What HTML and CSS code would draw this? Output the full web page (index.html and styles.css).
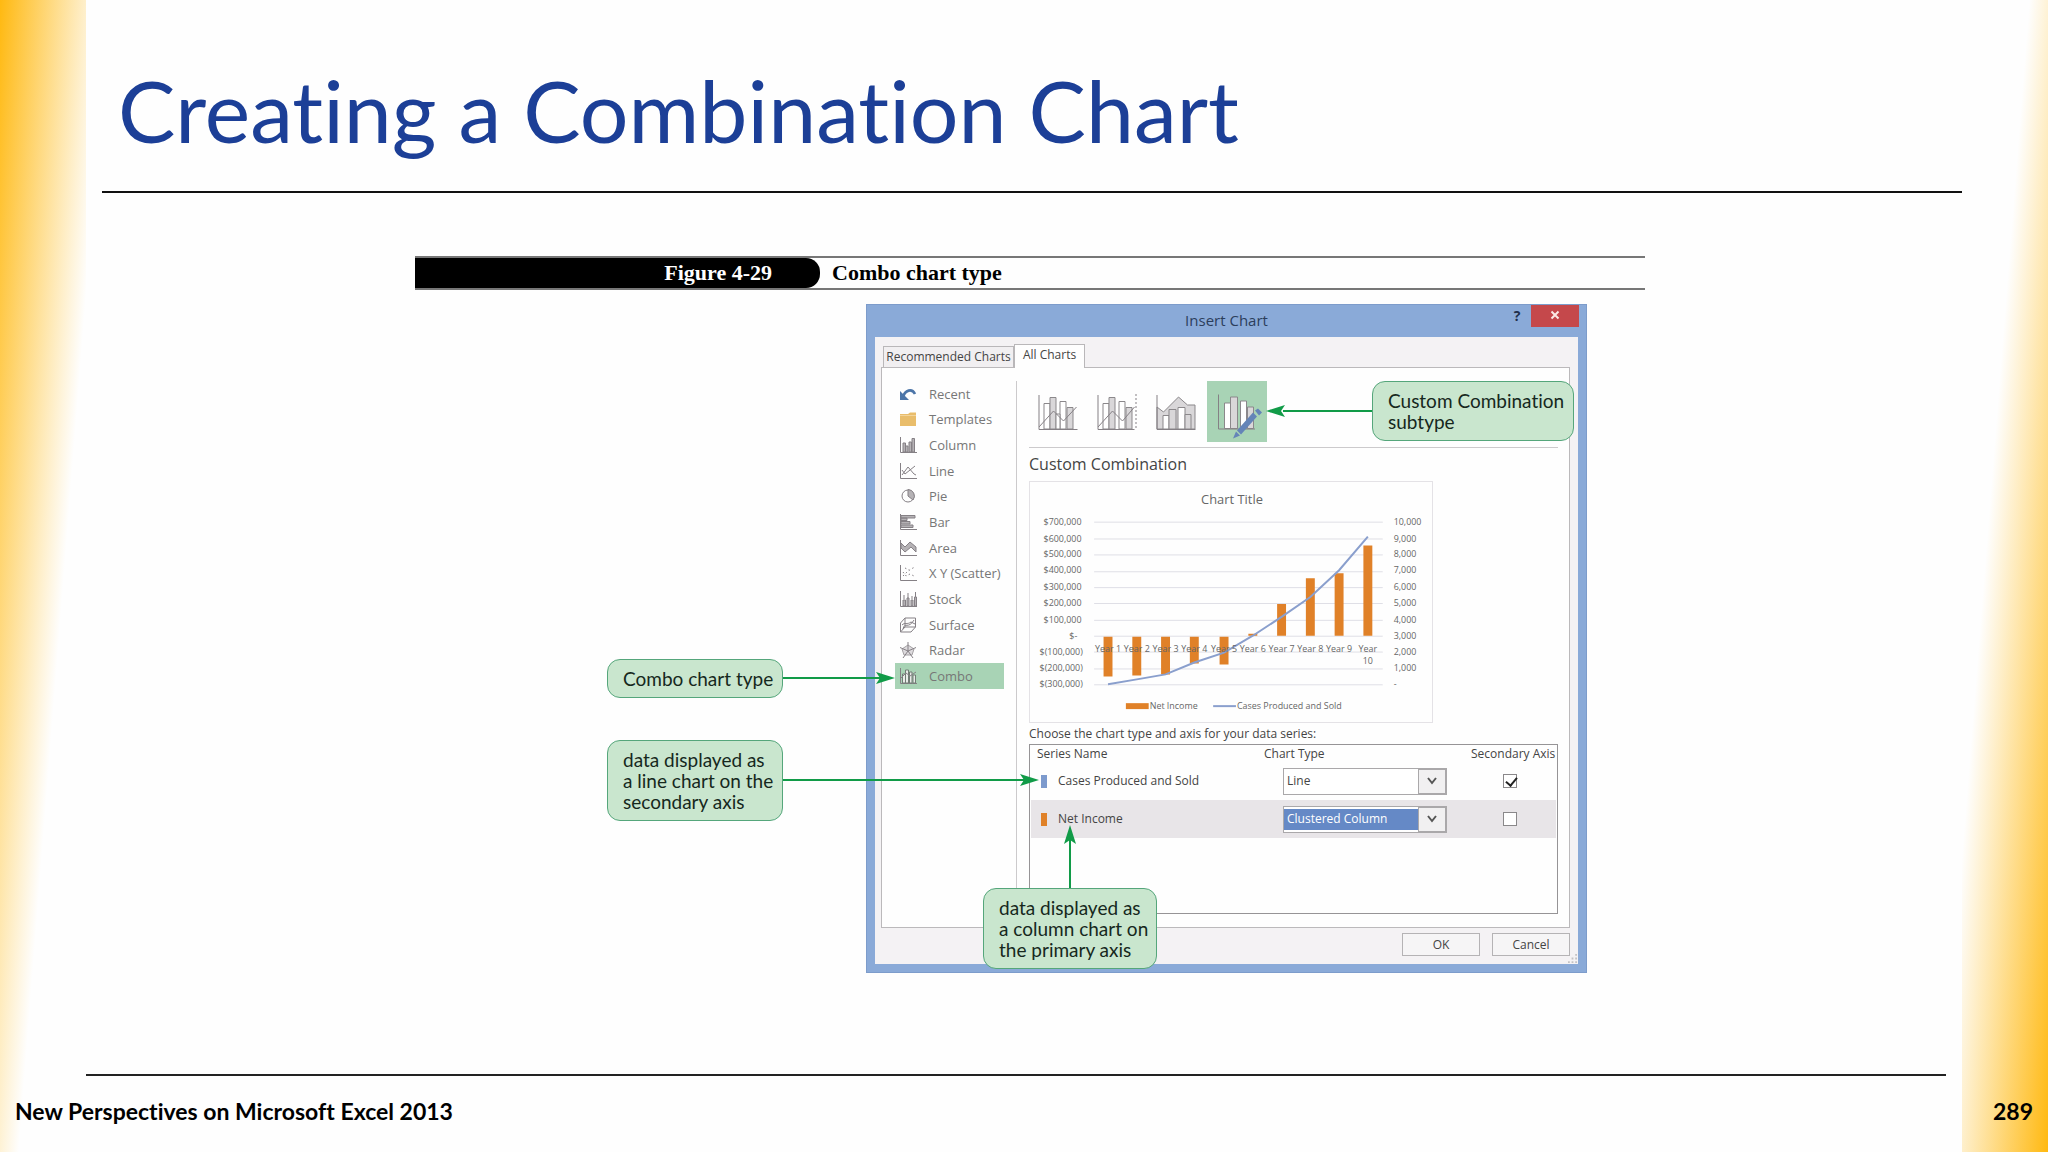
FILE: index.html
```
<!DOCTYPE html>
<html lang="en">
<head>
    <meta charset="utf-8" />
    <title>Creating a Combination Chart</title>
    <link rel="stylesheet" href="styles.css">
</head>
<body>
    <header>
        <h1>Creating a Combination Chart</h1>
    </header>

    <main>
        <figure>
            <figcaption>
                <span class="fig-number">Figure 4-29</span>
                <span class="fig-title">Combo chart type</span>
            </figcaption>

            <div class="stage">
                <section class="dialog">
                    <div class="title-bar">
                        <h2>Insert Chart</h2>
                        <button class="help">?</button>
                        <button class="close" aria-label="Close">
                            <svg width="10" height="10" viewBox="0 0 10 10"><path d="M1.5 1.5L8.5 8.5M8.5 1.5L1.5 8.5" stroke="#fbe9e4" stroke-width="2" /></svg>
                        </button>
                    </div>

                    <div class="dialog-body">
                        <nav class="tabs">
                            <button class="tab">Recommended Charts</button>
                            <button class="tab active">All Charts</button>
                        </nav>

                        <div class="panel">
                            <ul class="types">
                                <li>
                                    <svg viewBox="0 0 18 18"><path d="M4 12C6 5 13 3 16 9" fill="none" stroke="#4c75a8" stroke-width="2.6" /><path d="M1 6V15H10Z" fill="#4c75a8" /></svg>
                                    Recent
                                </li>
                                <li>
                                    <svg viewBox="0 0 18 18"><path d="M1 4H9L11 2.500H17V16H1Z" fill="#e9bd6b" /><path d="M1 5.500H17" stroke="#f3d49a" /></svg>
                                    Templates
                                </li>
                                <li>
                                    <svg viewBox="0 0 18 18"><path class="ax" d="M1.500 1V16.500H18" /><path class="gr" d="M4 7H6.500V16H4ZM6.500 10H9V16H6.500ZM10 6H12.500V16H10ZM13 2.500H15.500V16H13Z" /></svg>
                                    Column
                                </li>
                                <li>
                                    <svg viewBox="0 0 18 18"><path class="ax" d="M1.500 1V16.500H18M3 13L9 5L15 12L17 13M3 8L6 12L11 8L16 4" /></svg>
                                    Line
                                </li>
                                <li>
                                    <svg viewBox="0 0 18 18"><circle class="ax" cx="9" cy="9" r="6" /><path class="gr" d="M9 9V2.500A6.500 6.500 0 0 1 14 13Z" /></svg>
                                    Pie
                                </li>
                                <li>
                                    <svg viewBox="0 0 18 18"><path class="ax" d="M1.500 1V16.500H18" /><path class="gr" d="M2 2.500H16V5H2ZM2 5H8V7.500H2ZM2 8.500H11V11H2ZM2 12H14V14.500H2Z" /></svg>
                                    Bar
                                </li>
                                <li>
                                    <svg viewBox="0 0 18 18"><path class="ax" d="M1.500 1V16.500H18" /><path class="gr" d="M2 4L6 8L11 3L17 8V13L12 8L6 13L2 9Z" /></svg>
                                    Area
                                </li>
                                <li>
                                    <svg viewBox="0 0 18 18"><path class="ax" d="M1.500 1V16.500H18" /><path class="ax" stroke-dasharray="1.500 2.500" d="M4 12L8 8L12 5L16 3M6 4L10 6M4 8L7 12L11 10L15 12" /></svg>
                                    X Y (Scatter)
                                </li>
                                <li>
                                    <svg viewBox="0 0 18 18"><path class="ax" d="M1.500 1V16.500H18M5 5V9M9 3V8M13 6V9M16.500 2V7" /><path class="gr" d="M4 10H6.500V16H4ZM8 8H10V16H8ZM12 10H14V16H12ZM15.500 7H17.500V16H15.500Z" /></svg>
                                    Stock
                                </li>
                                <li>
                                    <svg viewBox="0 0 18 18"><path class="ax" d="M1.500 7L6 2H16.500V11L12 16H1.500ZM6 2V11L1.500 16M6 11H16.500M4 13C6 5 9 14 15 4M3 9C6 6 8 9 12 6L16 8" /></svg>
                                    Surface
                                </li>
                                <li>
                                    <svg viewBox="0 0 18 18"><path d="M9 4L15 8L13 14H5L3 8Z" fill="#dddadd" stroke="#a5a2a5" /><path class="ax" d="M9 1V10L1 6.500M9 10L17 6.500M9 10L4 17M9 10L14 17" /></svg>
                                    Radar
                                </li>
                                <li class="selected">
                                    <svg viewBox="0 0 18 18"><path class="ax" d="M1.500 1V16.500H18" /><path d="M3.500 7H6.500V16H3.500ZM6.500 3H9.500V16H6.500ZM10.500 5H13V16H10.500ZM14 8H16.500V16H14Z" fill="#e8ece8" stroke="#707c74" /><path class="ax" d="M2 11L7 6L11 9L17 5" /></svg>
                                    Combo
                                </li>
                            </ul>

                            <div class="options">
                                <div class="subtypes">
                                    <button aria-label="Clustered column - line">
                                        <svg viewBox="0 0 40 36"><path class="w" d="M6.500 9.500H12.500V35H6.500ZM22.500 7.500H28.500V35H22.500Z" /><path class="g" d="M12.500 3.500H18.500V35H12.500ZM29.500 13.500H35.500V35H29.500Z" /><path class="w" d="M18.500 20H22.500V35H18.500Z" /><path class="ax" d="M1.500 1V35.500H40M1.500 33L16 17L26 27L39 13" /></svg>
                                    </button>
                                    <button aria-label="Clustered column - line on secondary axis">
                                        <svg viewBox="0 0 40 36"><path class="w" d="M6.500 9.500H12.500V35H6.500ZM22.500 7.500H28.500V35H22.500Z" /><path class="g" d="M12.500 3.500H18.500V35H12.500ZM29.500 13.500H35.500V35H29.500Z" /><path class="ax" d="M1.500 1V35.500H38M1.500 33L16 17L26 27L38 13" /><path class="ax" stroke-dasharray="2 2" d="M39.500 0V35" /></svg>
                                    </button>
                                    <button aria-label="Stacked area - clustered column">
                                        <svg viewBox="0 0 40 36"><path class="g" d="M1.500 13L8 18L23 3L32 11H39.500V35H1.500Z" /><path class="w" d="M7.500 21.500H13.500V35H7.500ZM22.500 13.500H29.500V35H22.500Z" /><path class="g" d="M13.500 15.500H20.500V35H13.500ZM29.500 20.500H35.500V35H29.500Z" /><path class="ax" d="M1.500 1V35.500H40" /></svg>
                                    </button>
                                    <button class="selected" aria-label="Custom combination">
                                        <svg viewBox="0 0 60 60"><path class="w" d="M17.500 21.500H23.500V47H17.500ZM33.500 19.500H39.500V47H33.500Z" /><path class="g" d="M23.500 15.500H30.500V47H23.500ZM40.500 25.500H46.500V47H40.500Z" /><path class="ax" d="M11.500 13V47.500H48" /><path d="M30 49L46 31L50 35L34 53ZM48 29L51 27L55 31L52 34ZM29 50L33 54L26 57Z" fill="#6484b8" /></svg>
                                    </button>
                                </div>

                                <h3>Custom Combination</h3>

                                <svg class="chart" viewBox="0 0 404 242" role="img" aria-label="Chart preview">
                                    <text x="203" y="22" class="chart-title">Chart Title</text>
                                    <path class="grid" d="M64 40.500H355M64 57.500H355M64 73.500H355M64 90.500H355M64 106.500H355M64 122.500H355M64 139.500H355M64 155.500H355M64 171.500H355M64 188.500H355M64 204.500H355" />
                                    <path class="bars" d="M73.500 156h9v40h-9zM102.500 156h9v39h-9zM131.500 156h9v38h-9zM160.500 156h9v27h-9zM190.500 156h9v28h-9zM219.500 153h9v2h-9zM248.500 123h9v32h-9zM277.500 97h9v58h-9zM306.500 92h9v63h-9zM335.500 64h9v91h-9z" />
                                    <polyline class="series" points="78,204 107,199 136,194 165,182 195,172 224,155 253,136 282,116 311,89 340,55" />
                                    <g>
                                        <text x="13" y="43">$700,000</text>
                                        <text x="13" y="60">$600,000</text>
                                        <text x="13" y="76">$500,000</text>
                                        <text x="13" y="92">$400,000</text>
                                        <text x="13" y="109">$300,000</text>
                                        <text x="13" y="125">$200,000</text>
                                        <text x="13" y="142">$100,000</text>
                                        <text x="39" y="158">$-</text>
                                        <text x="9" y="174">$(100,000)</text>
                                        <text x="9" y="191">$(200,000)</text>
                                        <text x="9" y="207">$(300,000)</text>
                                    </g>
                                    <g>
                                        <text x="366" y="43">10,000</text>
                                        <text x="366" y="60">9,000</text>
                                        <text x="366" y="76">8,000</text>
                                        <text x="366" y="92">7,000</text>
                                        <text x="366" y="109">6,000</text>
                                        <text x="366" y="125">5,000</text>
                                        <text x="366" y="142">4,000</text>
                                        <text x="366" y="158">3,000</text>
                                        <text x="366" y="174">2,000</text>
                                        <text x="366" y="191">1,000</text>
                                        <text x="366" y="207">-</text>
                                    </g>
                                    <g class="years">
                                        <text x="78" y="171">Year 1</text>
                                        <text x="107" y="171">Year 2</text>
                                        <text x="136" y="171">Year 3</text>
                                        <text x="165" y="171">Year 4</text>
                                        <text x="195" y="171">Year 5</text>
                                        <text x="224" y="171">Year 6</text>
                                        <text x="253" y="171">Year 7</text>
                                        <text x="282" y="171">Year 8</text>
                                        <text x="311" y="171">Year 9</text>
                                        <text x="340" y="171">Year</text>
                                        <text x="340" y="184">10</text>
                                    </g>
                                    <path class="bars" d="M96 223h23v6H96z" />
                                    <text x="120" y="229">Net Income</text>
                                    <path class="series" d="M184 226H207" />
                                    <text x="208" y="229">Cases Produced and Sold</text>
                                </svg>

                                <p>Choose the chart type and axis for your data series:</p>

                                <div class="series-box">
                                    <table>
                                        <thead>
                                            <tr>
                                                <th class="name">Series Name</th>
                                                <th class="kind">Chart Type</th>
                                                <th class="axis">Secondary Axis</th>
                                            </tr>
                                        </thead>
                                        <tbody>
                                            <tr>
                                                <td class="name"><i class="swatch blue"></i><label for="kind-cases">Cases Produced and Sold</label></td>
                                                <td class="kind">
                                                    <div class="combo">
                                                        <select id="kind-cases"><option>Line</option></select>
                                                        <span><svg width="10" height="8" viewBox="0 0 10 8"><path d="M1 1L5 6L9 1" fill="none" stroke="#555" stroke-width="2" /></svg></span>
                                                    </div>
                                                </td>
                                                <td class="axis"><input type="checkbox" aria-label="Secondary axis for Cases Produced and Sold" checked /></td>
                                            </tr>
                                            <tr class="current">
                                                <td class="name"><i class="swatch orange"></i><label for="kind-income">Net Income</label></td>
                                                <td class="kind">
                                                    <div class="combo focused">
                                                        <select id="kind-income"><option>Clustered Column</option></select>
                                                        <span><svg width="10" height="8" viewBox="0 0 10 8"><path d="M1 1L5 6L9 1" fill="none" stroke="#555" stroke-width="2" /></svg></span>
                                                    </div>
                                                </td>
                                                <td class="axis"><input type="checkbox" aria-label="Secondary axis for Net Income" /></td>
                                            </tr>
                                        </tbody>
                                    </table>
                                </div>
                            </div>
                        </div>

                        <div class="actions">
                            <button>OK</button>
                            <button>Cancel</button>
                        </div>
                        <svg class="grip" viewBox="0 0 10 10"><path d="M8 0h2v2H8zM4 4h2v2H4zM8 4h2v2H8zM0 8h2v2H0zM4 8h2v2H4zM8 8h2v2H8z" fill="#c4c2c4" /></svg>
                    </div>
                </section>

                <!-- callout arrows, drawn over the dialog -->
                <svg class="arrows" width="1230" height="670" viewBox="0 0 1230 670">
                    <path d="M368 374H466M368 476H610M655 584V536M957 107H868" />
                    <g>
                        <path d="M480 374L461 368L465 374L461 380Z" />
                        <path d="M624 476L605 470L609 476L605 482Z" />
                        <path d="M655 521L649 540L655 536L661 540Z" />
                        <path d="M851 107L870 101L866 107L870 113Z" />
                    </g>
                </svg>
                <div class="callout combo-note">Combo chart type</div>
                <div class="callout line-note">data displayed as<br>a line chart on the<br>secondary axis</div>
                <div class="callout column-note">data displayed as<br>a column chart on<br>the primary axis</div>
                <div class="callout custom-note">Custom Combination<br>subtype</div>
            </div>
        </figure>
    </main>

    <footer>
        <span>New Perspectives on Microsoft Excel 2013</span>
        <span>289</span>
    </footer>
</body>
</html>
```

FILE: styles.css
```
* {
    box-sizing: border-box;
    padding: 0;
    margin: 0;
}

body {
    display: flex;
    flex-direction: column;
    min-height: 100vh;
    font-family: Lato, sans-serif;
    font-variant-ligatures: none;
    background-color: #fefefe;
    background-image:
        linear-gradient(94.5deg, #ffb911, #fefefe 109px),
        linear-gradient(274.5deg, #ffb911, #fefefe 109px);
    background-size: 86px 100%;
    background-position: left top, right top;
    background-repeat: no-repeat;
}

header {
    height: 193px;
    margin: 0 86px 0 102px;
    padding: 62px 0 0 16px;
    border-bottom: 2px solid #111;
}

h1 {
    color: #1c3f97;
    font-size: 86px;
    line-height: 96px;
    font-weight: normal;
    white-space: nowrap;
}

main {
    flex: 1;
    padding: 63px 86px 0 98px;
}

figure {
    max-width: 1230px;
    margin: 0 auto;
}

figcaption {
    display: flex;
    height: 34px;
    border-top: 2px solid #777;
    border-bottom: 2px solid #777;
    font: bold 22px/30px "Liberation Serif", serif;
}

.fig-number {
    width: 405px;
    padding-right: 48px;
    text-align: right;
    color: white;
    background-color: black;
    border-radius: 0 14px 14px 0;
}

.fig-title {
    padding-left: 12px;
}

.stage {
    position: relative;
    padding: 14px 0 0 451px;
}

/* dialog window */

.dialog {
    width: 721px;
    padding: 0 8px 8px;
    background-color: #8aaad8;
    border: 1px solid #7d9ccb;
    color: #444;
    font: 12px/16px "Open Sans", sans-serif;
}

.dialog button, .dialog select {
    font: inherit;
    color: inherit;
}

.title-bar {
    display: flex;
    align-items: flex-start;
    height: 32px;
    margin-right: -1px;
}

.title-bar h2 {
    flex: 1;
    padding-left: 75px;
    text-align: center;
    font-size: 15px;
    line-height: 30px;
    font-weight: normal;
    color: #2c3e5c;
}

.dialog .help {
    width: 28px;
    height: 22px;
    border: none;
    background: none;
    color: #1f2f4c;
    font-size: 14px;
    font-weight: bold;
}

.close {
    width: 48px;
    height: 22px;
    border: none;
    background-color: #c5484b;
}

.dialog-body {
    position: relative;
    padding: 7px 8px 8px 6px;
    background-color: #f4f2f4;
}

.tabs {
    display: flex;
    align-items: flex-end;
    padding-left: 2px;
}

.tab {
    height: 21px;
    width: 131px;
    border: 1px solid #b9b7b9;
    border-bottom: none;
    background-color: #f1eff1;
    white-space: nowrap;
}

.tab.active {
    width: 71px;
    height: 24px;
    margin-bottom: -1px;
    padding-bottom: 3px;
    background-color: #fefefe;
}

.panel {
    display: flex;
    height: 561px;
    padding: 13px 11px 14px 13px;
    border: 1px solid #bbb9bb;
    background-color: #fefefe;
}

.types {
    display: grid;
    grid-template-rows: repeat(12, 1fr);
    width: 109px;
    height: 308px;
    list-style: none;
    font-size: 13px;
    color: #777;
}

.types li {
    display: flex;
    align-items: center;
    gap: 12px;
    padding-left: 4px;
    white-space: nowrap;
}

.types svg {
    width: 18px;
    height: 18px;
}

.types .selected, .subtypes .selected {
    background-color: #a8d3b5;
}

.ax {
    fill: none;
    stroke: #858085;
}

.gr {
    fill: #b5b2b5;
    stroke: #858085;
}

.w {
    fill: white;
    stroke: #8b888b;
}

.g {
    fill: #d9d7d9;
    stroke: #8b888b;
}

.options {
    flex: 1;
    margin-left: 12px;
    padding-left: 12px;
    border-left: 1px solid #cccacc;
}

.subtypes {
    display: flex;
    align-items: center;
    gap: 18px;
    height: 67px;
    padding: 0 0 5px 8px;
    border-bottom: 1px solid #cccacc;
}

.subtypes button {
    width: 41px;
    height: 36px;
    border: none;
    background: none;
}

.subtypes .selected {
    width: 60px;
    height: 61px;
    margin-left: -7px;
}

.subtypes svg {
    display: block;
    width: 100%;
    height: 100%;
}

h3 {
    font-size: 16px;
    line-height: 33px;
    font-weight: normal;
}

.chart {
    display: block;
    width: 404px;
    height: 242px;
    border: 1px solid #e4e2e6;
}

.chart text {
    font-size: 9px;
    fill: #666;
}

.chart .chart-title {
    font-size: 13px;
    text-anchor: middle;
}

.years {
    text-anchor: middle;
}

.grid {
    stroke: #dfdfe6;
}

.bars {
    fill: #e08128;
}

.series {
    fill: none;
    stroke: #8a9fcd;
    stroke-width: 2;
}

.options p {
    line-height: 21px;
}

.series-box {
    height: 170px;
    border: 1px solid #969496;
    padding: 0 1px;
}

table {
    width: 100%;
    table-layout: fixed;
    border-collapse: collapse;
}

th {
    height: 17px;
    font-weight: normal;
    text-align: left;
    white-space: nowrap;
}

td {
    height: 38px;
}

th.name {
    width: 233px;
    padding-left: 6px;
}

td.name {
    padding-left: 10px;
}

td.kind {
    padding-left: 19px;
}

th.axis {
    width: 85px;
}

td.axis {
    padding-left: 32px;
}

.current {
    background-color: #e8e5e8;
}

.swatch {
    display: inline-block;
    width: 6px;
    height: 13px;
    margin-right: 11px;
    vertical-align: middle;
}

.blue {
    background-color: #7d9acd;
}

.orange {
    background-color: #e08128;
}

.combo {
    display: flex;
    width: 164px;
    height: 27px;
    border: 1px solid #aaa8aa;
    background-color: white;
}

.combo select {
    flex: 1;
    appearance: none;
    padding-left: 3px;
    border: none;
    background: none;
}

.combo span {
    display: flex;
    align-items: center;
    justify-content: center;
    width: 28px;
    border: 1px solid #aaa8aa;
    background-color: #f1f0f1;
}

.dialog .focused select {
    margin: 2px 0;
    color: white;
    background-color: #6589c6;
}

input[type="checkbox"] {
    display: block;
    appearance: none;
    width: 14px;
    height: 14px;
    border: 1px solid #8a888a;
    background-color: white;
}

input[type="checkbox"]:checked::after {
    content: "";
    display: block;
    width: 5px;
    height: 9px;
    margin-left: 4px;
    border: solid #222;
    border-width: 0 2px 2px 0;
    transform: rotate(40deg);
}

.actions {
    display: flex;
    justify-content: flex-end;
    gap: 12px;
    padding-top: 5px;
}

.actions button {
    width: 78px;
    height: 23px;
    border: 1px solid #b5b3b5;
    background-color: #f6f5f6;
}

.grip {
    position: absolute;
    right: 1px;
    bottom: 1px;
    width: 9px;
    height: 9px;
}

/* annotations */

.arrows {
    position: absolute;
    left: 0;
    top: 14px;
    fill: #119b48;
}

.arrows > path {
    fill: none;
    stroke: #119b48;
    stroke-width: 2;
}

.callout {
    position: absolute;
    padding: 8px 15px;
    border: 1px solid #55a67b;
    border-radius: 13px;
    background-color: #c9e6ce;
    color: #16281d;
    font-size: 19px;
    line-height: 21px;
    white-space: nowrap;
}

.combo-note {
    left: 192px;
    top: 369px;
    width: 176px;
}

.line-note {
    left: 192px;
    top: 450px;
    width: 176px;
}

.column-note {
    left: 568px;
    top: 598px;
    width: 174px;
}

.custom-note {
    left: 957px;
    top: 91px;
    width: 202px;
}

footer {
    display: flex;
    justify-content: space-between;
    position: relative;
    height: 78px;
    padding: 23px 15px;
    font-size: 23px;
    line-height: 28px;
    font-weight: bold;
}

footer::before {
    content: "";
    position: absolute;
    top: 0;
    left: 86px;
    right: 102px;
    border-top: 2px solid #222;
}
```
